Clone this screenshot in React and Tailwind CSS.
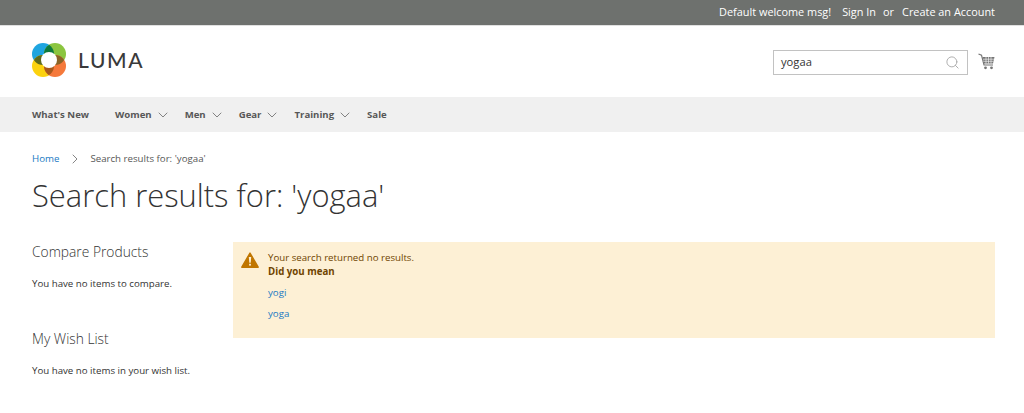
import { ChevronDown, ChevronRight, Search } from 'lucide-react';

const navItems = [
  { label: "What's New", gap: 'mr-[26px]' },
  { label: 'Women', chevron: true, gap: 'mr-[14px]' },
  { label: 'Men', chevron: true, gap: 'mr-[14px]' },
  { label: 'Gear', chevron: true, gap: 'mr-[14px]' },
  { label: 'Training', chevron: true, gap: 'mr-[14px]' },
  { label: 'Sale', gap: '' },
];

const Logo = () => (
  <svg width="34" height="34" viewBox="0 0 34 34" className="shrink-0">
    <defs>
      <clipPath id="clip-tl"><circle cx="11" cy="11" r="11" /></clipPath>
      <clipPath id="clip-br"><circle cx="23" cy="23" r="11" /></clipPath>
    </defs>
    <circle cx="11" cy="11" r="11" fill="#1fa5e0" />
    <circle cx="23" cy="11" r="11" fill="#8bc53f" />
    <circle cx="11" cy="23" r="11" fill="#fcd20f" />
    <circle cx="23" cy="23" r="11" fill="#f5793b" />
    <circle cx="23" cy="11" r="11" fill="#0f7a3c" clipPath="url(#clip-tl)" />
    <circle cx="11" cy="23" r="11" fill="#5d6a1e" clipPath="url(#clip-tl)" />
    <circle cx="11" cy="23" r="11" fill="#a8591c" clipPath="url(#clip-br)" />
    <circle cx="23" cy="11" r="11" fill="#8a6426" clipPath="url(#clip-br)" />
    <circle cx="17" cy="17" r="8" fill="#fff" />
  </svg>
);

const CartIcon = () => (
  <svg width="17" height="17" viewBox="0 0 17 17" className="mb-[3px]">
    <path d="M0.5 1 L3.5 2.2 L6 12 H15" fill="none" stroke="#757575" strokeWidth="1.2" />
    <path d="M4.5 4 H16.5 L15 10.5 H6 Z" fill="#757575" />
    <path d="M5 6.2 H16 M5.5 8.3 H15.5 M8 4 V10.5 M10.5 4 V10.5 M13 4 V10.5" stroke="#fff" strokeWidth="0.6" />
    <circle cx="7.5" cy="14.8" r="1.4" fill="#757575" />
    <circle cx="13.5" cy="14.8" r="1.4" fill="#757575" />
  </svg>
);

const WarningIcon = () => (
  <svg width="18" height="16" viewBox="0 0 18 16" className="shrink-0 mt-[1px]">
    <path d="M9 1 L17.2 15.2 H0.8 Z" fill="#c07600" stroke="#c07600" strokeWidth="1.4" strokeLinejoin="round" />
    <path d="M7.8 5 H10.2 L9.7 10.8 H8.3 Z" fill="#fdf0d5" />
    <rect x="8.1" y="11.8" width="1.8" height="1.8" fill="#fdf0d5" />
  </svg>
);

const App = () => {
  return (
    <div className="w-[1024px] h-[413px] overflow-hidden bg-white text-[#333] font-['Open_Sans',sans-serif] text-[9.7px]">
      <div className="h-[26px] bg-[#6e716e] border-b border-[#e0e0e0] flex items-center justify-end pr-[29px] text-[10.9px] text-white">
        <span>Default welcome msg!</span>
        <a className="ml-[11px]">Sign In</a>
        <span className="ml-[7px]">or</span>
        <a className="ml-[8px]">Create an Account</a>
      </div>

      <div className="h-[71px] flex items-start justify-between pl-[32px] pr-[29px]">
        <div className="flex items-center gap-[12px] pt-[17px]">
          <Logo />
          <span className="font-['Lato',sans-serif] text-[21px] font-medium tracking-[1.6px] text-[#3a3a3a]">LUMA</span>
        </div>
        <div className="flex items-center gap-[10px] pt-[24px]">
          <div className="w-[195px] h-[25px] border border-[#c2c2c2] flex items-center justify-between px-[7px] text-[11.2px]">
            <span>yogaa</span>
            <Search size={15} strokeWidth={1.5} color="#aaa" />
          </div>
          <CartIcon />
        </div>
      </div>

      <nav className="h-[35px] pt-[1px] bg-[#f0f0f0] flex items-center pl-[32px] font-bold text-[9.6px] text-[#575757]">
        {navItems.map((item) => (
          <div key={item.label} className={`flex items-center ${item.gap}`}>
            <span>{item.label}</span>
            {item.chevron && <ChevronDown size={16} strokeWidth={1.2} color="#666" className="ml-[3px] -mt-[1px]" />}
          </div>
        ))}
      </nav>

      <div className="pl-[32px] pr-[29px]">
        <div className="h-[20px] mt-[17px] flex items-center">
          <a className="text-[#1979c3]">Home</a>
          <ChevronRight size={16} strokeWidth={1.2} color="#666" className="ml-[8px] mr-[7px]" />
          <span className="text-[#575757]">Search results for: 'yogaa'</span>
        </div>
        <h1 className="mt-[6px] h-[40px] text-[30.9px] leading-[40px] font-light text-[#333]">Search results for: 'yogaa'</h1>

        <div className="flex mt-[27px]">
          <aside className="w-[201px] shrink-0">
            <h2 className="mt-[1px] text-[13.8px] leading-[18px] font-light">Compare Products</h2>
            <p className="mt-[16px] leading-[14px]">You have no items to compare.</p>
            <h2 className="mt-[39px] text-[13.8px] leading-[18px] font-light">My Wish List</h2>
            <p className="mt-[16px] leading-[14px]">You have no items in your wish list.</p>
          </aside>
          <div className="flex-1 h-[96px] bg-[#fdf0d5] flex items-start pl-[8px] pt-[9px] gap-[9px] text-[#6f4400]">
            <WarningIcon />
            <div className="leading-[14px]">
              <p>Your search returned no results.</p>
              <p className="font-bold">Did you mean</p>
              <a className="block mt-[7px] text-[#1979c3]">yogi</a>
              <a className="block mt-[7px] text-[#1979c3]">yoga</a>
            </div>
          </div>
        </div>
      </div>
    </div>
  );
};

export default App;
